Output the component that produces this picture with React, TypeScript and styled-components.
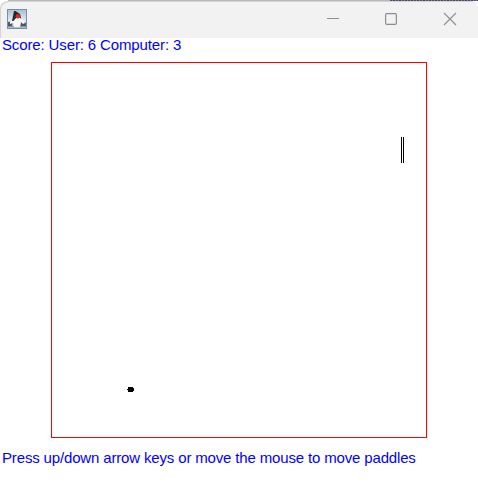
import React from "react";
import styled, { createGlobalStyle } from "styled-components";

const GlobalStyle = createGlobalStyle`
  * { box-sizing: border-box; }
  html, body { margin: 0; background: #fff; overflow: hidden; }
`;

const AppWindow = styled.main`
  width: 478px;
  height: 487px;
  display: flex;
  flex-direction: column;
  background: #fff;
  font-family: "Liberation Sans", Arial, sans-serif;
`;

const Backdrop = styled.div`
  height: 38px;
  flex: none;
  padding-top: 1px;
  background:
    repeating-linear-gradient(90deg, #50506e 0 2px, #8587a0 2px 3px, #3f4466 3px 5px, #94809a 5px 6px) 390px 0 / 88px 1px no-repeat,
    linear-gradient(#b9b9b9, #b9b9b9) 8px 0 / 382px 1px no-repeat,
    #fff;
`;

const TitleBar = styled.header`
  height: 37px;
  display: flex;
  align-items: flex-start;
  justify-content: space-between;
  padding: 8px 0 0 7px;
  background: #f2f2f2;
  border-radius: 8px 8px 0 0;
  box-shadow: inset 1px 1px 0 #d4d4d4;
`;

const Controls = styled.div`
  display: flex;
  gap: 44px;
  padding: 3px 21px 0 0;
`;

const Control = styled.button`
  width: 14px;
  height: 14px;
  padding: 0;
  border: 0;
  background: none;
  color: #8d8d8d;
  svg { display: block; }
  &:last-child { margin-left: 1px; }
`;

const Message = styled.p<{ $spacing: number; $height: number }>`
  height: ${({ $height }) => $height}px;
  margin: 0;
  padding-left: 2px;
  color: #00f;
  font-size: 15px;
  line-height: 14px;
  letter-spacing: ${({ $spacing }) => $spacing}px;
  white-space: pre;
`;

const Court = styled.section`
  position: relative;
  width: 376px;
  height: 376px;
  flex: none;
  margin: 0 0 13px 51px;
  border: 1px solid #f00;
`;

const Paddle = styled.div`
  position: absolute;
  left: 349px;
  top: 74px;
  width: 3px;
  height: 26px;
  border: solid #000;
  border-width: 0 1px;
`;

const Ball = styled.svg`
  position: absolute;
  left: 75px;
  top: 324px;
`;

const DukeIcon = () => (
  <svg width="20" height="20" viewBox="0 0 20 20" aria-label="Java">
    <defs>
      <linearGradient id="tile" x1="0" y1="0" x2="0" y2="1">
        <stop offset="0" stopColor="#a9bfd5" />
        <stop offset=".6" stopColor="#e2ebf1" />
        <stop offset="1" stopColor="#a5b5c5" />
      </linearGradient>
    </defs>
    <rect x=".5" y=".5" width="19" height="19" fill="url(#tile)" stroke="#7890a6" />
    <path d="M1 13 6 12 5 17H1ZM14 12 19 14V17H13Z" fill="#3f4b56" opacity=".9" />
    <path d="M1 17.5h18" stroke="#8799a9" />
    <path d="M6 9 3 13 3 15 6 14 7 18 13 18 14 13 16 15 18 14 14 7 11 6Z" fill="#f7f7f5" />
    <path d="M7 2 8.5 2 13 5 14.5 10 12 8 9 9 6.5 12 5 12Z" fill="#24272b" />
    <circle cx="10.8" cy="7.2" r="2.2" fill="#e52222" />
  </svg>
);

export default function App() {
  return (
    <>
      <GlobalStyle />
      <AppWindow>
        <Backdrop>
          <TitleBar>
            <DukeIcon />
            <Controls>
              <Control aria-label="Minimize">
                <svg width="14" height="14" fill="none" stroke="currentColor">
                  <path d="M1 6.5h12" />
                </svg>
              </Control>
              <Control aria-label="Maximize">
                <svg width="14" height="14" fill="none" stroke="currentColor">
                  <rect x="1.6" y="1.6" width="10.8" height="10.8" rx="1.3" strokeWidth="1.2" />
                </svg>
              </Control>
              <Control aria-label="Close">
                <svg width="14" height="14" fill="none" stroke="currentColor">
                  <path d="m1 1 12 12M13 1 1 13" strokeWidth="1.1" />
                </svg>
              </Control>
            </Controls>
          </TitleBar>
        </Backdrop>
        <Message $spacing={-0.13} $height={24}>Score: User: 6 Computer: 3</Message>
        <Court>
          <Paddle />
          <Ball width="7" height="5" shapeRendering="crispEdges">
            <path d="M1 0h5v1h1v3H6v1H1V3H0V2h1Z" />
          </Ball>
        </Court>
        <Message $spacing={-0.155} $height={20}>Press up/down arrow keys or move the mouse to move paddles</Message>
      </AppWindow>
    </>
  );
}
